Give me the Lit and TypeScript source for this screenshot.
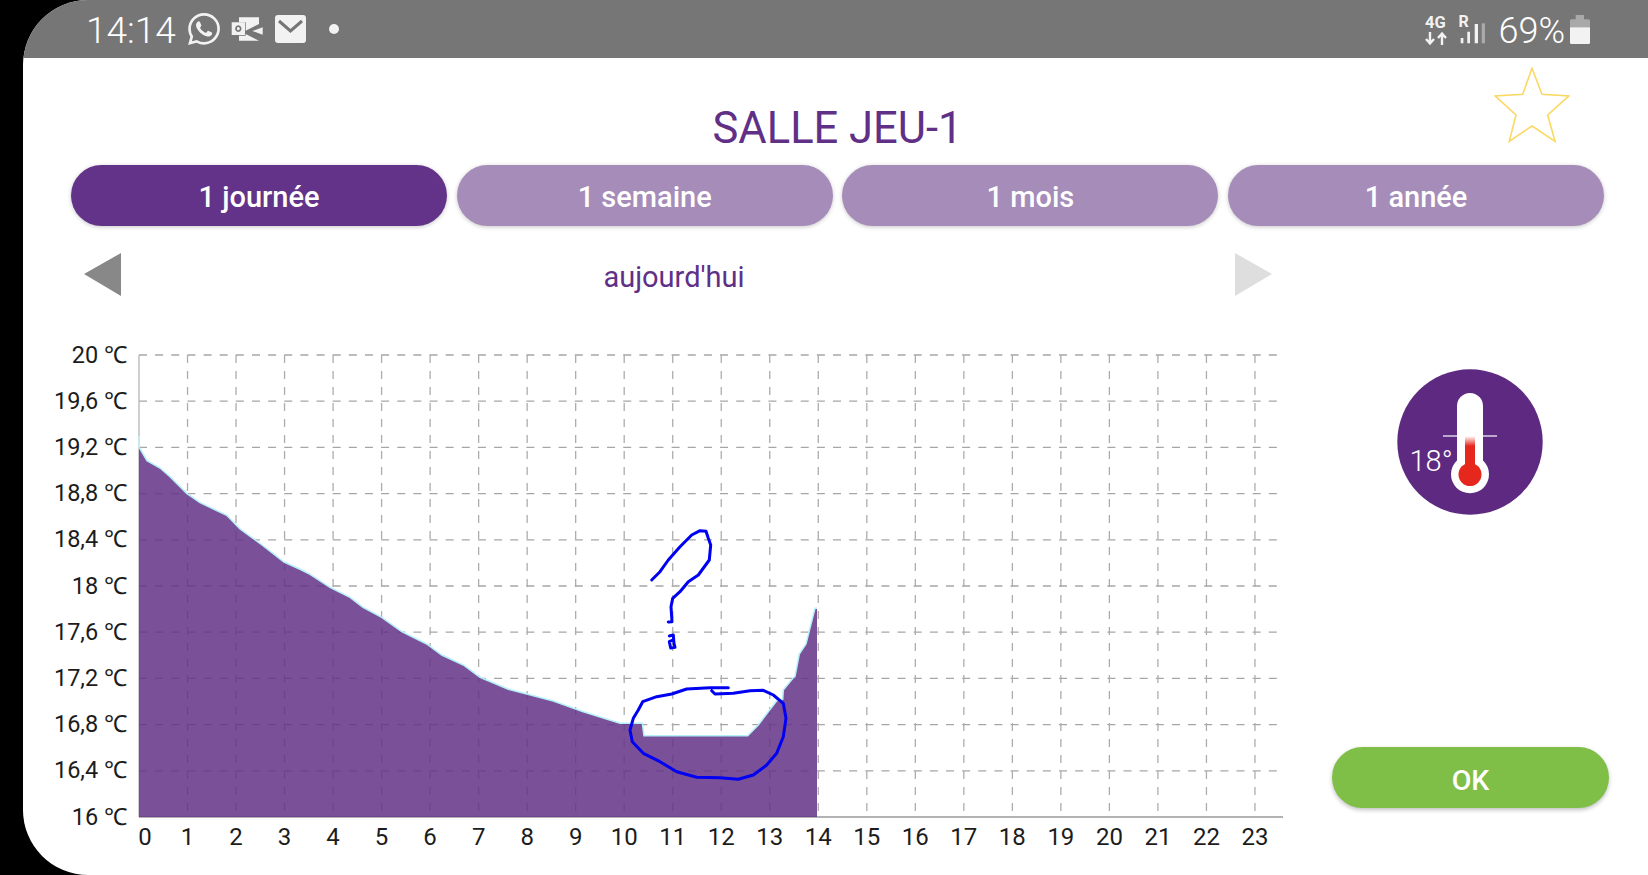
import { LitElement, html, css, svg } from "lit";
import { customElement, state } from "lit/decorators.js";

const PLOT_LEFT = 139;
const PLOT_TOP = 355;
const PLOT_BOTTOM = 817;
const HOUR_W = 48.52;
const TICK_H = 46.2;

const Y_LABELS = ["20 ℃", "19,6 ℃", "19,2 ℃", "18,8 ℃", "18,4 ℃", "18 ℃", "17,6 ℃", "17,2 ℃", "16,8 ℃", "16,4 ℃", "16 ℃"];

// traced from the day curve, in page pixels
const CURVE: [number, number][] = [
  [139, 447], [147, 460.7], [160, 468], [170, 476.7], [186.7, 493.3], [200, 502.7], [226.7, 515.3],
  [240, 529], [262, 545], [284, 562], [300, 569.3], [310, 574.3], [330, 587.3], [350, 597.3],
  [363, 607.3], [381.7, 617.3], [401.7, 631.7], [426.7, 644], [441.7, 655], [463.3, 665], [480, 677.3],
  [508.3, 689.3], [526.7, 694], [553.3, 701], [583.3, 711.7], [620, 723.3], [642.3, 723.3], [644, 735.7],
  [747.7, 735.7], [758.3, 725], [776.7, 700.7], [782.7, 699.3], [783.3, 690], [793.3, 677.7], [795, 676.5],
  [799.3, 654], [806, 644], [815, 608.3], [817, 608.3],
];

// the two blue scribbles drawn over the screenshot, in crop units (x3, from 600,510)
const scribble = (pts: number[][]) => pts.map(([x, y]) => `${(600 + x / 3).toFixed(1)},${(510 + y / 3).toFixed(1)}`).join(" ");
const QUESTION = scribble([[155, 210], [180, 185], [205, 150], [240, 110], [275, 75], [300, 62], [318, 64], [325, 85], [332, 105], [328, 150], [295, 195], [265, 215], [240, 245], [218, 265], [213, 290], [216, 335], [205, 336]]);
const QUESTION_DOT = scribble([[208, 378], [220, 375], [222, 400], [225, 412], [212, 414], [208, 395], [218, 390]]);
const LOOP = scribble([[385, 533], [330, 533], [260, 537], [215, 552], [170, 560], [128, 575], [115, 600], [100, 625], [90, 660], [97, 695], [130, 730], [180, 755], [230, 785], [290, 802], [360, 803], [415, 808], [460, 795], [500, 765], [530, 730], [550, 680], [558, 625], [550, 580], [520, 555], [490, 541], [450, 542], [400, 550], [345, 552], [335, 542]]);

const WHATSAPP = "M17.472 14.382c-.297-.149-1.758-.867-2.03-.967-.273-.099-.471-.148-.67.15-.197.297-.767.966-.94 1.164-.173.199-.347.223-.644.075-.297-.15-1.255-.463-2.39-1.475-.883-.788-1.48-1.761-1.653-2.059-.173-.297-.018-.458.13-.606.134-.133.298-.347.446-.52.149-.174.198-.298.298-.497.099-.198.05-.371-.025-.52-.075-.149-.669-1.612-.916-2.207-.242-.579-.487-.5-.669-.51-.173-.008-.371-.01-.57-.01-.198 0-.52.074-.792.372-.272.297-1.04 1.016-1.04 2.479 0 1.462 1.065 2.875 1.213 3.074.149.198 2.096 3.2 5.077 4.487.709.306 1.262.489 1.694.625.712.227 1.36.195 1.871.118.571-.085 1.758-.719 2.006-1.413.248-.694.248-1.289.173-1.413-.074-.124-.272-.198-.57-.347m-5.421 7.403h-.004a9.87 9.87 0 01-5.031-1.378l-.361-.214-3.741.982.998-3.648-.235-.374a9.86 9.86 0 01-1.51-5.26c.001-5.45 4.436-9.884 9.888-9.884 2.64 0 5.122 1.03 6.988 2.898a9.825 9.825 0 012.893 6.994c-.003 5.45-4.437 9.884-9.885 9.884m8.413-18.297A11.815 11.815 0 0012.05 0C5.495 0 .16 5.335.157 11.892c0 2.096.547 4.142 1.588 5.945L.057 24l6.305-1.654a11.882 11.882 0 005.683 1.448h.005c6.554 0 11.89-5.335 11.893-11.893a11.821 11.821 0 00-3.48-8.413z";

@customElement("app-root")
export class AppRoot extends LitElement {
  static styles = css`
    :host {
      display: block;
      width: 1648px;
      height: 875px;
      background: #000;
      overflow: hidden;
      font-family: Roboto, "Liberation Sans", sans-serif;
    }

    .screen {
      margin-left: 23px;
      height: 875px;
      background: #fff;
      border-radius: 65px 0 0 65px;
      overflow: hidden;
      display: flex;
      flex-direction: column;
      position: relative;
    }

    .status {
      height: 58px;
      flex: none;
      background: #767676;
      color: #f2f2f2;
      display: flex;
      align-items: center;
      padding-left: 63px;
    }

    .time {
      font-size: 37px;
      line-height: 54px;
      padding-top: 4px;
      font-weight: 300;
      color: #fff;
      width: 102px;
    }

    .status svg {
      display: block;
      flex: none;
    }

    .mail {
      margin: 0 0 0 11px;
    }

    .dot {
      width: 10px;
      height: 10px;
      margin-left: 23px;
      border-radius: 50%;
      background: #f2f2f2;
    }

    .spacer {
      flex: 1;
    }

    .percent {
      font-size: 36px;
      line-height: 54px;
      padding-top: 4px;
      font-weight: 300;
      color: #fff;
      margin: 0 5px 0 11.3px;
    }

    .battery {
      margin-right: 58px;
    }

    h1 {
      margin: 0;
      padding: 46px 0 0 4px;
      height: 107px;
      box-sizing: border-box;
      flex: none;
      text-align: center;
      font-size: 43.5px;
      line-height: 50px;
      font-weight: 400;
      color: #603087;
    }

    .star {
      position: absolute;
      left: 1471px;
      top: 67px;
    }

    .tabs {
      display: grid;
      grid-template-columns: repeat(4, 376px);
      column-gap: 9.7px;
      margin-left: 48px;
      flex: none;
    }

    .tab {
      height: 61px;
      border-radius: 30.5px;
      background: #a58cb9;
      color: #fff;
      font-size: 29px;
      font-weight: 500;
      padding-top: 3px;
      box-sizing: border-box;
      display: flex;
      align-items: center;
      justify-content: center;
      box-shadow: 0 1px 4px rgba(0, 0, 0, 0.22);
    }

    .tab.on {
      background: #633389;
    }

    .nav {
      height: 114px;
      width: 1188px;
      box-sizing: border-box;
      margin-left: 61px;
      padding-top: 27px;
      flex: none;
      display: flex;
      justify-content: space-between;
      align-items: flex-start;
    }

    .nav svg {
      display: block;
    }

    .day {
      font-size: 29px;
      line-height: 48px;
      color: #603087;
      margin-right: 8px;
    }

    .main {
      display: flex;
      flex: 1;
    }

    .chart {
      display: block;
      flex: none;
    }

    .chart text {
      font-family: Roboto, "Liberation Sans", sans-serif;
      font-size: 24px;
      fill: #1c1c1c;
    }

    .chart text.temp {
      font-size: 23.5px;
    }

    .side {
      display: flex;
      flex-direction: column;
      align-items: flex-start;
      padding-top: 29px;
    }

    .gauge {
      display: block;
      margin-left: 69px;
    }

    .gauge text {
      font-family: Roboto, "Liberation Sans", sans-serif;
      font-size: 29px;
      font-weight: 300;
      fill: #fff;
    }

    .ok {
      margin: 232px 0 0 4px;
      width: 277px;
      height: 61px;
      border: none;
      border-radius: 30.5px;
      background: #7fbe47;
      color: #fff;
      font: 500 28.5px Roboto, "Liberation Sans", sans-serif;
      padding: 6px 0 0;
      box-shadow: 0 2px 4px rgba(0, 0, 0, 0.25);
    }
  `;

  @state() private tabs = ["1 journée", "1 semaine", "1 mois", "1 année"];

  private renderGrid() {
    const hours = Array.from({ length: 24 }, (_, i) => PLOT_LEFT + i * HOUR_W);
    const rows = Y_LABELS.map((_, i) => PLOT_TOP + i * TICK_H);
    return svg`
      ${rows.slice(0, -1).map(
        (y) => svg`<line x1=${PLOT_LEFT} x2="1277" y1=${y} y2=${y} stroke="#a6a6a6" stroke-width="1.3" stroke-dasharray="8 8.14"></line>`
      )}
      ${hours.slice(1).map(
        (x) => svg`<line x1=${x} x2=${x} y1=${PLOT_TOP} y2=${PLOT_BOTTOM} stroke="#adadad" stroke-width="1.3" stroke-dasharray="8 8"></line>`
      )}
      <line x1=${PLOT_LEFT} x2=${PLOT_LEFT} y1=${PLOT_TOP} y2=${PLOT_BOTTOM} stroke="#b5b5b5" stroke-width="1.3"></line>
      <line x1=${PLOT_LEFT} x2="1283" y1=${PLOT_BOTTOM} y2=${PLOT_BOTTOM} stroke="#999" stroke-width="1.3"></line>
    `;
  }

  private renderChart() {
    const line = CURVE.map((p) => p.join(",")).join(" ");
    return html`
      <svg class="chart" width="1305" height="535" viewBox="23 340 1305 535">
        ${this.renderGrid()}
        ${Y_LABELS.map(
          (label, i) => svg`<text class="temp" x="127" y=${PLOT_TOP + i * TICK_H + 7.5} text-anchor="end">${label}</text>`
        )}
        ${Array.from({ length: 24 }, (_, i) => i).map(
          (h) => svg`<text x=${h === 0 ? 145 : PLOT_LEFT + h * HOUR_W} y="844.5" text-anchor="middle">${h}</text>`
        )}
        <polygon points="${line} 817,817 139,817" fill="#633187" fill-opacity="0.85"></polygon>
        <line x1="139" x2="139" y1="436" y2="447" stroke="#c4f1f6" stroke-width="1.5"></line>
        <polyline points=${line} fill="none" stroke="#b4f0f7" stroke-width="1.5"></polyline>
        <g fill="none" stroke="#0000f2" stroke-width="3" stroke-linecap="round" stroke-linejoin="round">
          <polyline points=${QUESTION}></polyline>
          <polyline points=${QUESTION_DOT}></polyline>
          <polyline points=${LOOP}></polyline>
        </g>
      </svg>
    `;
  }

  private renderGauge() {
    return html`
      <svg class="gauge" width="146" height="146" viewBox="0 0 146 146">
        <defs>
          <linearGradient id="mercury" x1="0" x2="0" y1="0" y2="1">
            <stop offset="0" stop-color="#e5271e" stop-opacity="0"></stop>
            <stop offset="0.25" stop-color="#e5271e"></stop>
          </linearGradient>
        </defs>
        <circle cx="73" cy="73" r="72.7" fill="#5e2a81"></circle>
        <line x1="46" x2="100" y1="67" y2="67" stroke="#ddd3e6" stroke-width="1.5"></line>
        <path d="M60 37a13 13 0 0 1 26 0v54.500a19 19 0 1 1-26 0z" fill="#fff"></path>
        <rect x="68" y="67" width="10" height="40" fill="url(#mercury)"></rect>
        <circle cx="73" cy="105.500" r="11.500" fill="#e5271e"></circle>
        <text x="12.500" y="102">18°</text>
      </svg>
    `;
  }

  render() {
    return html`
      <div class="screen">
        <div class="status">
          <span class="time">14:14</span>
          <svg width="32" height="32" viewBox="0 0 24 24" fill="#f2f2f2"><path d=${WHATSAPP}></path></svg>
          <svg style="margin-left:11px" width="33" height="26" viewBox="232 17 33 26" fill="#f2f2f2">
            <path d="M240 18.300h20v6.700l-13.300 6.700v-8.400h-6.700z"></path>
            <path d="M246.700 35L260 41.700h-20v-5h6.700z"></path>
            <path d="M263.700 28.300v7.400L253.300 32z"></path>
            <path fill-rule="evenodd" d="M232.700 23.300h13.300V36h-13.300zM239.300 26.300a3.200 3.300 0 1 0 .01 0zM239.300 28a1.500 1.600 0 1 1-.01 0z"></path>
          </svg>
          <svg class="mail" width="31" height="28" viewBox="0 0 31 28">
            <rect width="31" height="28" rx="3" fill="#f2f2f2"></rect>
            <path d="M4 6l11.500 10L27 6" fill="none" stroke="#767676" stroke-width="3"></path>
          </svg>
          <span class="dot"></span>
          <span class="spacer"></span>
          <svg width="62" height="38" viewBox="1426 10 62 38">
            <text x="1426" y="28" font-family="Roboto" font-size="16.500" font-weight="700" fill="#f2f2f2">4G</text>
            <text x="1459.500" y="27" font-family="Roboto" font-size="16" font-weight="700" fill="#f2f2f2">R</text>
            <path d="M1431 32v11M1427 39l4 4.500 4-4.500M1443 45V34M1439 38l4-4.500 4 4.500" fill="none" stroke="#f2f2f2" stroke-width="2.400"></path>
            <path d="M1461.700 38h2.700v5.300h-2.700zM1468.300 31.700h2.700v11.600h-2.700zM1475.700 24h3.300v19.300h-3.300z" fill="#f2f2f2"></path>
            <path d="M1482.700 23.300h3.300v20h-3.300z" fill="#aaa"></path>
          </svg>
          <span class="percent">69%</span>
          <svg class="battery" width="20" height="29" viewBox="0 0 20 29">
            <path d="M5.700 0h8.300v4.300h4.500a1.500 1.500 0 0 1 1.500 1.500V12.300H0V5.800a1.500 1.500 0 0 1 1.500-1.500h4.200z" fill="#a9a9a9"></path>
            <path d="M0 12.300h20V27.500a1.500 1.500 0 0 1-1.500 1.500h-17A1.500 1.500 0 0 1 0 27.500z" fill="#f2f2f2"></path>
          </svg>
        </div>
        <h1>SALLE JEU-1</h1>
        <svg class="star" width="76" height="76" viewBox="1494 67 76 76">
          <path d="M1532 68.300l10 26 26.700 1.700-21 19 7.300 26.300L1532 126l-22.700 15.300 6.700-26.300-20.700-19 27.400-1.700z" fill="none" stroke="#fbd862" stroke-width="1.600"></path>
        </svg>
        <div class="tabs">
          ${this.tabs.map((t, i) => html`<div class="tab ${i === 0 ? "on" : ""}">${t}</div>`)}
        </div>
        <div class="nav">
          <svg width="37" height="43" viewBox="0 0 37 43"><path d="M37 0v43L0 21z" fill="#888"></path></svg>
          <span class="day">aujourd'hui</span>
          <svg width="37" height="43" viewBox="0 0 37 43"><path d="M0 0v43l37-22z" fill="#dedede"></path></svg>
        </div>
        <div class="main">
          ${this.renderChart()}
          <div class="side">
            ${this.renderGauge()}
            <button class="ok">OK</button>
          </div>
        </div>
      </div>
    `;
  }
}
